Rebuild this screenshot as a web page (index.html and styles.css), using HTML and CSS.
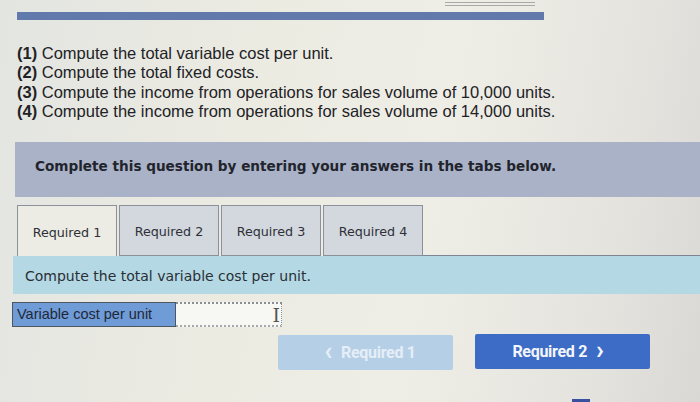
FILE: index.html
```html
<!DOCTYPE html>
<html>
<head>
<meta charset="utf-8">
<link rel="stylesheet" href="styles.css">
</head>
<body>
<div class="page">
  <div class="topline"></div>
  <div class="bar"></div>
  <ol class="questions">
    <li><b>(1)</b> Compute the total variable cost per unit.</li>
    <li><b>(2)</b> Compute the total fixed costs.</li>
    <li><b>(3)</b> Compute the income from operations for sales volume of 10,000 units.</li>
    <li><b>(4)</b> Compute the income from operations for sales volume of 14,000 units.</li>
  </ol>
  <div class="panel">Complete this question by entering your answers in the tabs below.</div>
  <div class="tabs">
    <div class="tab active">Required 1</div>
    <div class="tab">Required 2</div>
    <div class="tab">Required 3</div>
    <div class="tab">Required 4</div>
    <div class="tab-rest"></div>
  </div>
  <div class="content">Compute the total variable cost per unit.</div>
  <div class="field">
    <div class="label">Variable cost per unit</div>
    <div class="input"><span class="cursor">I</span></div>
  </div>
  <div class="nav">
    <div class="btn disabled"><span class="chev">&lsaquo;</span> Required 1</div>
    <div class="btn primary">Required 2 <span class="chev">&rsaquo;</span></div>
  </div>
  <div class="marker"></div>
</div>
</body>
</html>
```
FILE: styles.css
```css
html, body {
  margin: 0;
  padding: 0;
}
body {
  width: 700px;
  height: 402px;
  overflow: hidden;
  background: linear-gradient(100deg, #e3e5e1 0%, #ecebe2 35%, #efeee6 60%, #e4e3de 85%, #d9d8d4 100%);
}
.page {
  display: flex;
  flex-direction: column;
  height: 402px;
}
.topline {
  margin: 2px 0 0 445px;
  width: 90px;
  height: 2px;
  border-top: 1px solid #a7a9a9;
  border-bottom: 1px solid #a7a9a9;
}
.bar {
  margin: 6px 0 0 17px;
  width: 527px;
  height: 8px;
  background: #6279ab;
}
.questions {
  list-style: none;
  margin: 24px 0 0 17px;
  padding: 0;
  font-family: "Liberation Sans", Arial, sans-serif;
  font-size: 16.5px;
  line-height: 19.3px;
  color: #222226;
}
.questions b {
  font-weight: bold;
}
.panel {
  margin: 21px 0 0 15px;
  height: 55px;
  box-sizing: border-box;
  padding: 16px 0 0 20px;
  background: #a9b2c7;
  font-family: "DejaVu Sans", Verdana, sans-serif;
  font-weight: bold;
  font-size: 13.6px;
  color: #22242c;
}
.tabs {
  display: flex;
  margin: 8px 0 0 17px;
  height: 52px;
}
.tab {
  width: 100px;
  margin-right: 2px;
  box-sizing: border-box;
  border: 1px solid #8b909a;
  background: #d3d8df;
  display: flex;
  align-items: center;
  justify-content: center;
  font-family: "DejaVu Sans", Verdana, sans-serif;
  font-size: 12.7px;
  color: #2e3037;
  padding-top: 2px;
}
.tab.active {
  background: #ecebe4;
  border-bottom: none;
}
.tab-rest {
  flex: 1;
  border-bottom: 1px solid #7d8591;
  margin-left: -2px;
}
.content {
  margin: 0 0 0 13px;
  height: 38px;
  box-sizing: border-box;
  padding: 12px 0 0 12px;
  background: #b4d8e4;
  font-family: "DejaVu Sans", Verdana, sans-serif;
  font-size: 14px;
  color: #2a2f36;
}
.field {
  display: flex;
  margin: 8px 0 0 12px;
  height: 25px;
}
.label {
  width: 164px;
  box-sizing: border-box;
  border: 1px solid #4e5660;
  background: #6f9bd6;
  padding: 3px 0 0 4px;
  font-family: "Liberation Sans", Arial, sans-serif;
  font-size: 14.5px;
  color: #1f2836;
}
.input {
  width: 106px;
  box-sizing: border-box;
  border-top: 2px dotted #8a8f96;
  border-bottom: 2px dotted #a4a8ad;
  border-right: 1px dotted #8a8f96;
  background: #f7f7f3;
  display: flex;
  justify-content: flex-end;
  align-items: center;
  padding-right: 1px;
}
.cursor {
  font-family: "DejaVu Serif", serif;
  font-size: 19px;
  line-height: 20px;
  color: #555;
}
.nav {
  display: flex;
  margin: 7px 0 0 278px;
  gap: 22px;
}
.btn {
  width: 175px;
  height: 35px;
  border-radius: 2px;
  display: flex;
  align-items: center;
  justify-content: center;
  font-family: Roboto, "Liberation Sans", sans-serif;
  font-weight: bold;
  font-size: 16px;
  letter-spacing: -0.3px;
}
.btn.disabled {
  background: #b5cfe7;
  color: #e5eef6;
  margin-top: 1px;
}
.btn.primary {
  background: #3c6cc6;
  color: #f4f6fb;
}
.chev {
  font-size: 26px;
  font-weight: bold;
  line-height: 20px;
  margin: -4px 9px 0;
}
.marker {
  margin: 29px 0 0 572px;
  width: 18px;
  height: 3px;
  background: #3b4fa0;
}
```
